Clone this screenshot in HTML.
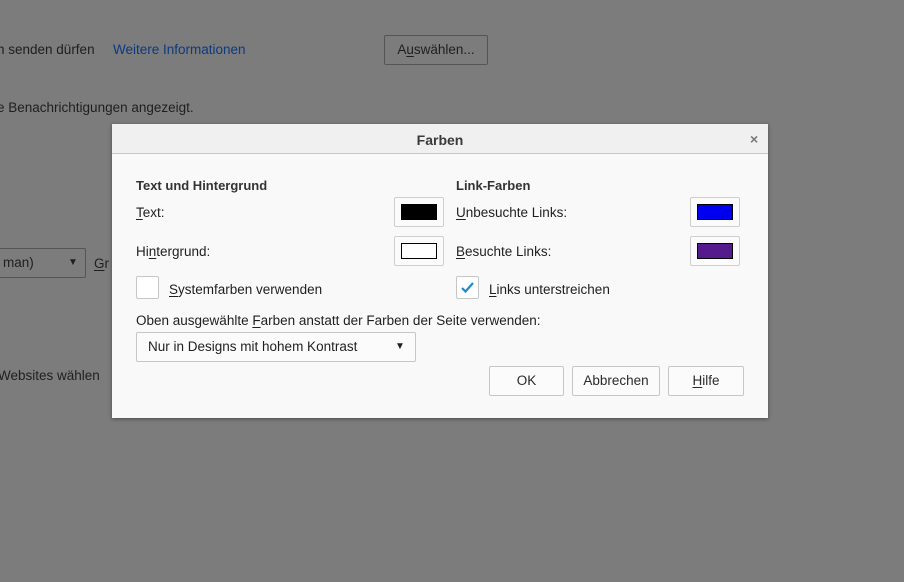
<!DOCTYPE html>
<html><head><meta charset="utf-8"><style>
*{margin:0;padding:0;box-sizing:border-box}
body{width:904px;height:582px;background:#7c7c7c;font-family:"Liberation Sans",sans-serif;font-size:13.5px;color:#1f1f1f;position:relative;overflow:hidden}
.a{position:absolute;white-space:nowrap}
u{text-decoration:underline;text-underline-offset:2px}
.dlg{position:absolute;left:112px;top:124px;width:656px;height:294px;background:#f9f9f9;box-shadow:0 1px 4px rgba(0,0,0,.4)}
.tb{position:absolute;left:0;top:0;width:656px;height:30px;background:#f0f0f0;border-bottom:1px solid #c8c8c8}
.sw{position:absolute;width:50px;height:30px;border:1px solid #cfcfcf;background:#fbfbfb;border-radius:2px}
.sw i{position:absolute;left:6px;top:6px;width:36px;height:16px;border:1px solid #000}
.btn{position:absolute;height:30px;border:1px solid #c6c6c6;background:#fbfbfb;border-radius:2px;text-align:center;line-height:28px;color:#2a2a2a}
.cb{position:absolute;width:23px;height:23px;border:1px solid #c6c6c6;background:#fff;border-radius:2px}
</style></head><body>
<div class="a" style="left:-3px;top:42px;color:#1e1e1e">n senden dürfen</div>
<div class="a" style="left:113px;top:42px;color:#0b3a7e">Weitere Informationen</div>
<div class="a" style="left:384px;top:35px;width:104px;height:30px;border:1px solid #555;border-radius:2px;text-align:center;line-height:28px">A<u>u</u>swählen...</div>
<div class="a" style="left:-3px;top:100px">e Benachrichtigungen angezeigt.</div>
<div class="a" style="left:-10px;top:248px;width:96px;height:30px;border:1px solid #555;border-radius:2px;line-height:28px;padding-left:12px">man)<span style="position:absolute;left:77px;top:0;font-size:10px">▼</span></div>
<div class="a" style="left:94px;top:256px"><u>G</u>r</div>
<div class="a" style="left:-2px;top:368px">Websites wählen</div>
<div class="dlg">
<div class="tb"><div class="a" style="left:0;width:656px;text-align:center;top:8px;font-weight:bold;color:#3a3a3a;font-size:14px">Farben</div>
<div class="a" style="left:638px;top:7px;color:#777;font-size:14px;font-weight:bold">×</div></div>
<div class="a" style="left:24px;top:54px;font-weight:bold;font-size:13px;color:#333">Text und Hintergrund</div>
<div class="a" style="left:24px;top:81px"><u>T</u>ext:</div>
<div class="sw" style="left:282px;top:73px"><i style="background:#000"></i></div>
<div class="a" style="left:24px;top:120px">Hi<u>n</u>tergrund:</div>
<div class="sw" style="left:282px;top:112px"><i style="background:#fff"></i></div>
<div class="cb" style="left:24px;top:152px"></div>
<div class="a" style="left:57px;top:158px"><u>S</u>ystemfarben verwenden</div>
<div class="a" style="left:344px;top:54px;font-weight:bold;font-size:13px;color:#333">Link-Farben</div>
<div class="a" style="left:344px;top:81px"><u>U</u>nbesuchte Links:</div>
<div class="sw" style="left:578px;top:73px"><i style="background:#0000ee"></i></div>
<div class="a" style="left:344px;top:120px"><u>B</u>esuchte Links:</div>
<div class="sw" style="left:578px;top:112px"><i style="background:#551a8b"></i></div>
<div class="cb" style="left:344px;top:152px"><svg width="21" height="21" viewBox="0 0 21 21"><path d="M5 11l3.5 3.5L16 6" stroke="#1a8ad4" stroke-width="2.2" fill="none"/></svg></div>
<div class="a" style="left:377px;top:158px"><u>L</u>inks unterstreichen</div>
<div class="a" style="left:24px;top:189px">Oben ausgewählte <u>F</u>arben anstatt der Farben der Seite verwenden:</div>
<div class="a" style="left:24px;top:208px;width:280px;height:30px;border:1px solid #c6c6c6;background:#fbfbfb;border-radius:2px;line-height:28px;padding-left:11px">Nur in Designs mit hohem Kontrast<span style="position:absolute;left:258px;top:0;font-size:10px">▼</span></div>
<div class="btn" style="left:377px;top:242px;width:75px">OK</div>
<div class="btn" style="left:460px;top:242px;width:88px">Abbrechen</div>
<div class="btn" style="left:556px;top:242px;width:76px"><u>H</u>ilfe</div>
</div>
</body></html>
